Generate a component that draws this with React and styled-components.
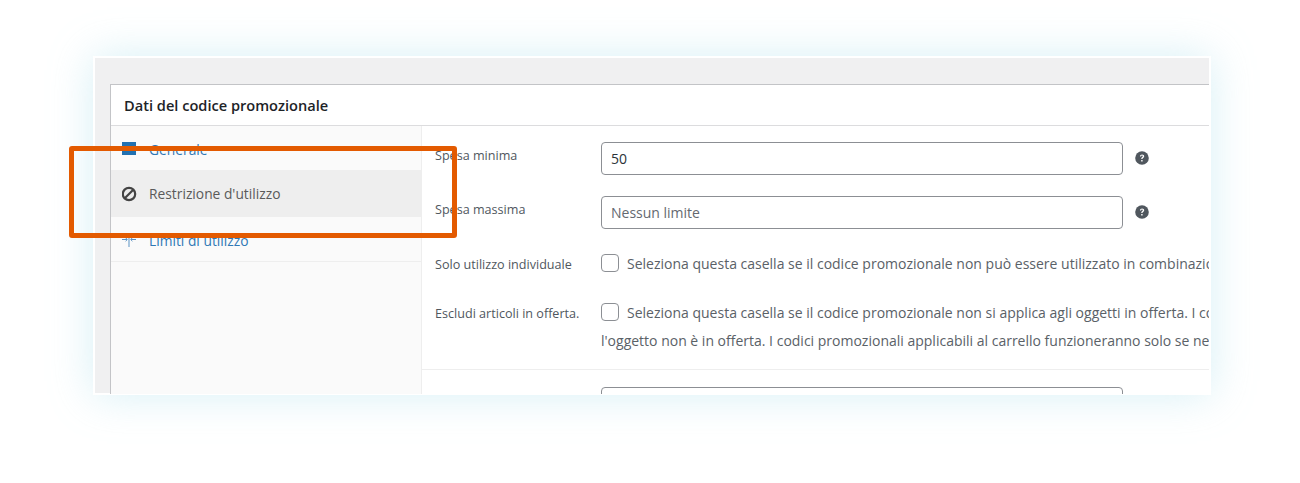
import React from 'react'
import styled, { createGlobalStyle } from 'styled-components'

const GlobalStyle = createGlobalStyle`
  body {
    margin: 0;
    background: #fff;
    font-family: 'Open Sans', 'Noto Sans', sans-serif;
  }
`

const TicketIcon = () => (
  <svg width='14' height='13' viewBox='0 0 14 13'>
    <rect width='14' height='13' fill='#2271b1' />
  </svg>
)

const BlockIcon = () => (
  <svg width='16' height='16' viewBox='1 0 16 16' fill='none' stroke='#444' strokeWidth='2.2'>
    <circle cx='8' cy='8' r='6.2' />
    <line x1='4' y1='12' x2='12' y2='4' />
  </svg>
)

const LimitIcon = () => (
  <svg width='14' height='15' viewBox='0 1 14 15' fill='none' stroke='#5b93c4' strokeWidth='1'>
    <line x1='7' y1='0' x2='7' y2='15' />
    <path d='M0 7.5h5M3.6 5.8l1.7 1.7-1.7 1.7M14 7.5H9M10.4 5.8L8.7 7.5l1.7 1.7' />
  </svg>
)

const HelpIcon = () => (
  <HelpSvg width='14' height='14' viewBox='0 0 14 14'>
    <circle cx='7' cy='7' r='6.8' fill='#50575e' />
    <path
      d='M4.9 5.4c.1-1.3 1-2 2.2-2 1.2 0 2.1.7 2.1 1.8 0 1.6-1.7 1.5-1.7 2.9H6.2c0-1.9 1.6-1.9 1.6-2.8 0-.4-.3-.7-.8-.7s-.8.3-.9.8z'
      fill='#fff'
    />
    <rect x='6.2' y='9' width='1.4' height='1.5' fill='#fff' />
  </HelpSvg>
)

const App = () => {
  return (
    <>
      <GlobalStyle />
      <Page>
        <Card>
          <Panel>
            <PanelTitle>Dati del codice promozionale</PanelTitle>
            <PanelBody>
              <Tabs>
                <Tab $first>
                  <TabIcon $raised><TicketIcon /></TabIcon>
                  <TabLink>Generale</TabLink>
                </Tab>
                <Tab $active>
                  <TabIcon><BlockIcon /></TabIcon>
                  <TabLink $active>Restrizione d'utilizzo</TabLink>
                </Tab>
                <Tab $last>
                  <TabIcon><LimitIcon /></TabIcon>
                  <TabLink>Limiti di utilizzo</TabLink>
                </Tab>
              </Tabs>
              <Fields>
                <FieldGroup>
                  <InputRow>
                    <Label>Spesa minima</Label>
                    <TextInput readOnly value='50' />
                    <HelpIcon />
                  </InputRow>
                  <InputRow>
                    <Label>Spesa massima</Label>
                    <TextInput readOnly placeholder='Nessun limite' />
                    <HelpIcon />
                  </InputRow>
                  <CheckRow>
                    <Label>Solo utilizzo individuale</Label>
                    <CheckText>
                      <Checkbox />
                      Seleziona questa casella se il codice promozionale non può essere utilizzato in combinazione con altri codici promozionali.
                    </CheckText>
                  </CheckRow>
                  <CheckRow>
                    <Label>Escludi articoli in offerta.</Label>
                    <div>
                      <CheckText>
                        <Checkbox />
                        Seleziona questa casella se il codice promozionale non si applica agli oggetti in offerta. I codici promozionali
                      </CheckText>
                      <CheckText>
                        l'oggetto non è in offerta. I codici promozionali applicabili al carrello funzioneranno solo se nel carrello non ci sono oggetti in offerta.
                      </CheckText>
                    </div>
                  </CheckRow>
                </FieldGroup>
                <NextGroup>
                  <InputRow>
                    <Label />
                    <TextInput readOnly />
                  </InputRow>
                </NextGroup>
              </Fields>
            </PanelBody>
          </Panel>
          <Highlight />
        </Card>
      </Page>
    </>
  )
}

const Page = styled.div`
  width: 1300px;
  height: 483px;
  padding: 56px 0 0 93px;
  box-sizing: border-box;
  overflow: hidden;
`

const Card = styled.div`
  position: relative;
  box-sizing: border-box;
  width: 1118px;
  height: 339px;
  border: 2px solid #fff;
  background: #f0f0f1;
  padding: 26px 0 0 15px;
  box-shadow: 0 0 40px rgba(155, 218, 232, 0.4);
`

const Panel = styled.div`
  height: 100%;
  overflow: hidden;
  background: #fff;
  border-top: 1px solid #c3c4c7;
  border-left: 1px solid #c3c4c7;
  display: flex;
  flex-direction: column;
`

const PanelTitle = styled.h2`
  margin: 0;
  flex: none;
  height: 40px;
  line-height: 41px;
  padding-left: 13px;
  font-size: 14.6px;
  font-weight: 600;
  color: #1d2327;
  border-bottom: 1px solid #dcdcde;
`

const PanelBody = styled.div`
  flex: 1;
  min-height: 0;
  display: flex;
`

const Tabs = styled.ul`
  flex: none;
  width: 310px;
  margin: 0;
  padding: 0;
  list-style: none;
  background: #fafafa;
  border-right: 1px solid #eee;
`

const Tab = styled.li`
  display: flex;
  align-items: center;
  box-sizing: border-box;
  height: ${(props) => (props.$first ? '44px' : props.$last ? '45px' : '47px')};
  padding: ${(props) => (props.$first ? '3px 0 0 11px' : props.$last ? '2px 0 0 11px' : '0 0 0 11px')};
  background: ${(props) => (props.$active ? '#eee' : 'transparent')};
  border-bottom: ${(props) => (props.$last ? '1px solid #eee' : 'none')};
`

const TabIcon = styled.span`
  flex: none;
  width: 27px;
  margin-top: ${(props) => (props.$raised ? '-3px' : '0')};
  display: flex;
  justify-content: flex-start;
  align-items: center;
`

const TabLink = styled.span`
  font-size: 13.8px;
  color: ${(props) => (props.$active ? '#5a5a5a' : '#2f78b5')};
`

const Fields = styled.div`
  flex: 1;
  min-width: 0;
  overflow: hidden;
`

const FieldGroup = styled.div`
  box-sizing: border-box;
  height: 244px;
  padding: 15px 0 0 13px;
  border-bottom: 1px solid #eee;
`

const NextGroup = styled.div`
  padding: 16px 0 0 13px;
`

const InputRow = styled.div`
  display: flex;
  align-items: center;
  height: 34px;
  margin-bottom: 20px;
`

const Label = styled.label`
  flex: none;
  width: 166px;
  margin-top: -4px;
  font-size: 12.6px;
  line-height: 18px;
  color: #50575e;
`

const TextInput = styled.input`
  flex: none;
  box-sizing: border-box;
  width: 522px;
  height: 33px;
  padding: 0 9px;
  border: 1px solid #8c8f94;
  border-radius: 4px;
  background: #fff;
  font-family: inherit;
  font-size: 14px;
  color: #2c3338;
  outline: none;

  &::placeholder {
    color: #646970;
    opacity: 1;
  }
`

const HelpSvg = styled.svg`
  flex: none;
  margin-left: 12px;
`

const CheckRow = styled.div`
  display: flex;
  align-items: flex-start;
  margin-bottom: 21px;
  white-space: nowrap;

  ${Label} {
    margin-top: 7px;
  }
`

const CheckText = styled.div`
  display: flex;
  align-items: center;
  height: 28px;
  font-size: 14px;
  color: #5a6167;
  white-space: nowrap;
`

const Checkbox = styled.span`
  flex: none;
  box-sizing: border-box;
  width: 18px;
  height: 18px;
  margin-right: 8px;
  border: 1px solid #8c8f94;
  border-radius: 4px;
  background: #fff;
`

const Highlight = styled.div`
  position: absolute;
  left: -26px;
  top: 88px;
  box-sizing: border-box;
  width: 388px;
  height: 92px;
  border: 5px solid #e35a00;
  border-radius: 3px;
  pointer-events: none;
`

export default App
